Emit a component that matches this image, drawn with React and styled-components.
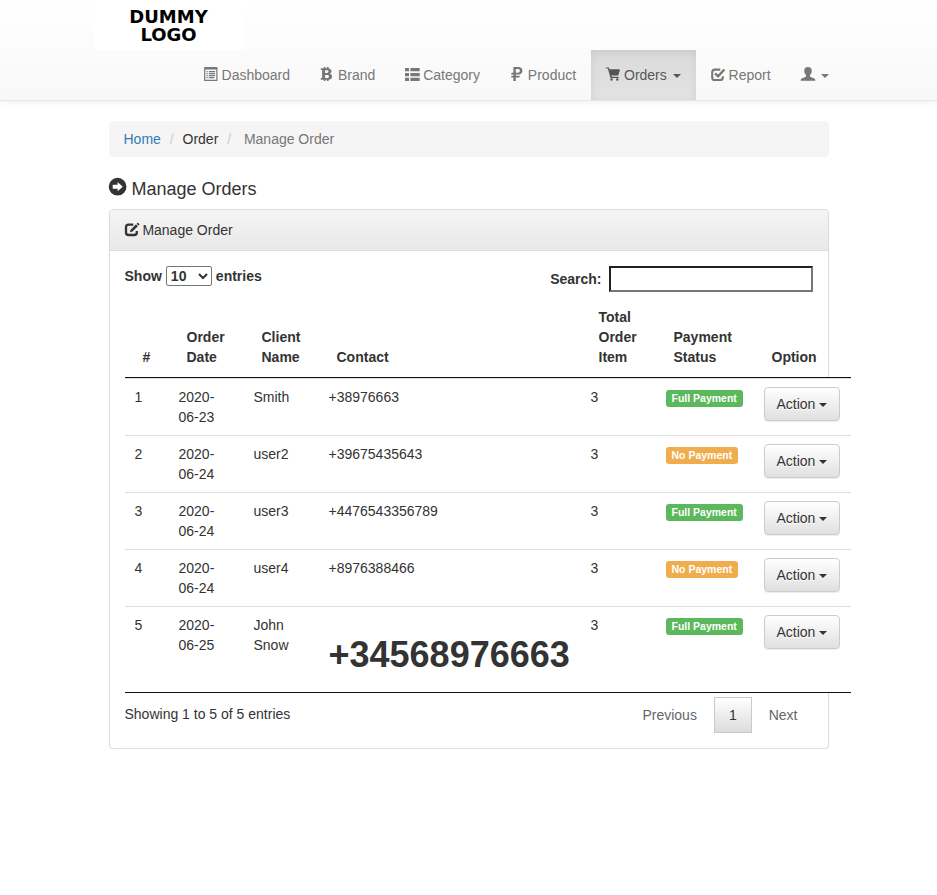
import React from 'react';
import styled, { createGlobalStyle } from 'styled-components';

const GlobalStyle = createGlobalStyle`
  *, *::before, *::after { box-sizing: border-box; }
  body {
    margin: 0;
    background: #fff;
    color: #333;
    font-family: "Liberation Sans", Arial, sans-serif;
    font-size: 14px;
    line-height: 20px;
  }
  button, input, select { font-family: inherit; font-size: inherit; color: inherit; }
`;

const Container = styled.div`
  max-width: 750px;
  margin: 0 auto;
  padding: 0 15px;
`;

const Navbar = styled.header`
  background: linear-gradient(to bottom, #fff 0%, #f8f8f8 100%);
  border-bottom: 1px solid #e7e7e7;
  box-shadow: inset 0 1px 0 rgba(255, 255, 255, 0.15), 0 1px 5px rgba(0, 0, 0, 0.075);
`;

const NavbarInner = styled.div`
  max-width: 750px;
  margin: 0 auto;
  display: flex;
  flex-direction: column;
  align-items: flex-start;
`;

const Brand = styled.a`
  display: flex;
  flex-direction: column;
  align-items: center;
  justify-content: center;
  width: 150px;
  height: 50px;
  padding-top: 2px;
  background: #fff;
  color: #000;
  font-family: "DejaVu Sans", sans-serif;
  font-size: 18px;
  font-weight: 700;
  line-height: 18px;
  text-decoration: none;
`;

const NavList = styled.ul`
  display: flex;
  align-self: flex-end;
  margin: 0;
  padding: 0;
  list-style: none;
`;

const NavLink = styled.a`
  display: block;
  padding: 15px;
  color: ${(p) => (p.$active ? '#555' : '#777')};
  background: ${(p) => (p.$active ? 'linear-gradient(to bottom, #dbdbdb 0%, #e2e2e2 100%)' : 'none')};
  box-shadow: ${(p) => (p.$active ? 'inset 0 3px 9px rgba(0, 0, 0, 0.075)' : 'none')};
  text-decoration: none;
  text-shadow: 0 1px 0 rgba(255, 255, 255, 0.25);
  white-space: nowrap;
`;

const IconBox = styled.span`
  display: inline-block;
  width: ${(p) => p.$size || 14}px;
  height: ${(p) => p.$size || 14}px;
  vertical-align: ${(p) => (p.$low ? -2 : -1)}px;
  svg { display: block; width: 100%; height: 100%; overflow: visible; }
`;

const Caret = styled.span`
  display: inline-block;
  margin-left: ${(p) => (p.$tight ? 0 : 2)}px;
  vertical-align: middle;
  border-top: 4px solid;
  border-right: 4px solid transparent;
  border-left: 4px solid transparent;
`;

const Breadcrumb = styled.ol`
  margin: 20px 0 21px;
  padding: 8px 15px;
  list-style: none;
  background: #f5f5f5;
  border-radius: 4px;
`;

const Crumb = styled.li`
  display: inline-block;
  color: ${(p) => (p.$active ? '#777' : '#333')};
  a { color: #337ab7; text-decoration: none; }
`;

const Slash = styled.span`
  padding: 0 5px;
  color: #ccc;
`;

const Title = styled.h4`
  margin: 0 0 10px;
  font-size: 18px;
  font-weight: 500;
  line-height: 20px;
`;

const Panel = styled.section`
  background: #fff;
  border: 1px solid #ddd;
  border-radius: 4px;
  box-shadow: 0 1px 2px rgba(0, 0, 0, 0.05);
`;

const PanelHeading = styled.div`
  padding: 10px 15px;
  border-bottom: 1px solid #ddd;
  border-radius: 3px 3px 0 0;
  background: linear-gradient(to bottom, #f5f5f5 0%, #e8e8e8 100%);
`;

const PanelBody = styled.div`
  padding: 15px;
`;

const Toolbar = styled.div`
  display: flex;
  justify-content: space-between;
  align-items: flex-start;
  margin-bottom: 5px;
`;

const FieldLabel = styled.label`
  display: flex;
  align-items: center;
  gap: ${(p) => p.$gap}px;
  font-weight: 700;
`;

const LengthSelect = styled.select`
  width: 46px;
  height: 20px;
  font-weight: 700;
  background: #fff;
  border: 1px solid #767676;
  border-radius: 2px;
`;

const SearchInput = styled.input`
  width: 204px;
  height: 26px;
  padding: 1px 2px;
  background: #fff;
  border: 2px inset #767676;
  font-weight: 400;
`;

const Table = styled.table`
  width: 100%;
  border-collapse: separate;
  border-spacing: 0;
  border-bottom: 1px solid #111;
`;

const HeadCell = styled.th`
  min-width: ${(p) => p.$min}px;
  padding: 10px 18px;
  border-bottom: 1px solid #111;
  text-align: left;
  vertical-align: bottom;
`;

const Cell = styled.td`
  padding: 8px 10px;
  background: #fff;
  border-top: 1px solid #ddd;
  vertical-align: top;
`;

const BigContact = styled.h1`
  margin: 20px 0 10px;
  font-size: 36px;
  font-weight: 700;
  line-height: 39px;
`;

const Status = styled.span`
  display: inline-block;
  padding: 2px 6px 3px;
  border-radius: 3px;
  background: ${(p) => (p.$paid ? '#5cb85c' : '#f0ad4e')};
  color: #fff;
  font-size: 75%;
  font-weight: 700;
  line-height: 12px;
  vertical-align: middle;
  white-space: nowrap;
`;

const ActionButton = styled.button`
  display: block;
  padding: 6px 12px;
  border: 1px solid #ccc;
  border-radius: 4px;
  background: linear-gradient(to bottom, #fff 0%, #e0e0e0 100%);
  box-shadow: inset 0 1px 0 rgba(255, 255, 255, 0.15), 0 1px 1px rgba(0, 0, 0, 0.075);
  line-height: 20px;
  text-shadow: 0 1px 0 #fff;
  white-space: nowrap;
  cursor: pointer;
`;

const TableFooter = styled.div`
  display: flex;
  justify-content: space-between;
  align-items: flex-start;
  padding-top: 4px;
`;

const Info = styled.div`
  padding-top: 7px;
`;

const Pager = styled.nav`
  display: flex;
  gap: 2px;
`;

const PageButton = styled.button`
  padding: 7px 14px;
  border: 1px solid ${(p) => (p.$current ? '#cacaca' : 'transparent')};
  background: ${(p) => (p.$current ? 'linear-gradient(to bottom, #fff 0%, #dcdcdc 100%)' : 'transparent')};
  color: ${(p) => (p.$current ? '#333' : '#666')};
  line-height: 20px;
`;

const Icon = ({ size, low, children }) => (
  <IconBox $size={size} $low={low} aria-hidden="true">
    <svg viewBox="0 0 14 14" fill="currentColor">{children}</svg>
  </IconBox>
);

const ListAltIcon = () => (
  <Icon>
    <path fillRule="evenodd" d="M.5 0h12.600q.4 0 .4.4v13.200q0 .4-.4.4H.5q-.4 0-.4-.4V.4Q.1 0 .5 0zM1.300 2.600v10.200h11V2.600z" />
    <path d="M2.500 4h1.200v1.200H2.500zM2.500 6h1.200v1.200H2.500zM2.500 8h1.200v1.200H2.500zM2.500 10h1.200v1.200H2.500zM4.800 4h6.300v1.200H4.800zM4.800 6h6.300v1.200H4.800zM4.800 8h6.300v1.200H4.800zM4.800 10h5.500v1.200H4.800z" />
  </Icon>
);

const BitcoinIcon = () => (
  <Icon>
    <path fillRule="evenodd" d="M.8 1.200h3V0h1.700v1.200h1.400V0h1.700v1.400c1.900.3 2.900 1.300 2.900 2.800 0 1.200-.6 2-1.600 2.500 1.400.5 2.200 1.500 2.200 2.900 0 1.900-1.300 3-3.500 3.200V14H6.900v-1.200H5.500V14H3.800v-1.200h-3v-1.700l1.300-.2V3.100L.8 2.900zM5.100 3.200v2.700h1.900c1 0 1.500-.5 1.500-1.400S8 3.200 7 3.200zM5.100 7.900v3h2.200c1.100 0 1.700-.6 1.700-1.500s-.6-1.500-1.700-1.500z" />
  </Icon>
);

const ThListIcon = () => (
  <Icon low>
    <path d="M.5 0h3q.5 0 .5.5v2.700H0V.5Q0 0 .5 0zM5.400 0h8.800q.5 0 .5.5v2.700H5.400zM0 5h4v3.300H0zM5.400 5h9.300v3.300H5.400zM0 9.800h4V13H.5q-.5 0-.5-.5zM5.400 9.800h9.300v2.700q0 .5-.5.5H5.400z" />
  </Icon>
);

const RubleIcon = () => (
  <Icon>
    <path fillRule="evenodd" d="M3.400 0h5c2.500 0 4 1.300 4 3.700s-1.500 3.800-4 3.800H5.800v1.300h4.100L9.300 10.400H5.800V14H3.400v-3.600H1l.7-1.600h1.700V7.500H1l.7-1.700h1.700zM5.800 2v3.700h2.100c1.300 0 2-.6 2-1.900S9.200 2 7.900 2z" />
  </Icon>
);

const CartIcon = () => (
  <Icon>
    <path d="M.3.4h2.200q.4 0 .5.4l.5 1.400h9.900q.7 0 .5.7l-1.500 5q-.2.6-.8.6H5.400l.4 1.300h6.400q.6 0 .6.600t-.6.600H5q-.5 0-.7-.5L1.900 1.600H.3Q-.2 1.600-.2 1T.3.400z" />
    <circle cx="5.500" cy="12.500" r="1.200" />
    <circle cx="11.300" cy="12.500" r="1.200" />
  </Icon>
);

const CheckIcon = () => (
  <Icon low>
    <path fill="none" stroke="currentColor" strokeWidth="2.1" d="M9.300 1.600H3.800Q1.200 1.600 1.200 4.200v5.200q0 2.600 2.600 2.600h5.400q2.600 0 2.600-2.600V8.200" />
    <path fill="none" stroke="currentColor" strokeWidth="2.400" d="M4.100 5.400l3 2.900 6.300-6.800" />
  </Icon>
);

const EditIcon = () => (
  <Icon low>
    <path fill="none" stroke="currentColor" strokeWidth="2.300" d="M8.300 1.600H3.600Q1 1.600 1 4.200v5.200q0 2.600 2.600 2.600h5.600q2.600 0 2.600-2.600V8" />
    <path d="M4.900 9.300l.7-2.600L11 1.300l1.900 1.900-5.400 5.400zM11.600.7l.8-.8q.4-.4.8 0L14.300 1q.4.400 0 .8l-.8.8z" />
  </Icon>
);

const UserIcon = () => (
  <Icon>
    <path d="M7 0c2.400 0 3.800 1.500 3.800 3.700 0 1.700-.8 3.300-1.800 4.200v1.300c0 .4.3.7.7.9l3.500 1.400c.8.300 1.100.9 1.100 1.700v.6H-.3v-.6c0-.8.3-1.400 1.100-1.700l3.500-1.400c.4-.2.7-.5.7-.9V7.900C4 7 3.200 5.400 3.200 3.700 3.200 1.500 4.600 0 7 0z" />
  </Icon>
);

const CircleArrowIcon = () => (
  <Icon size={18}>
    <path fillRule="evenodd" d="M6.700-.1a6.900 6.900 0 1 0 0 13.800A6.900 6.900 0 0 0 6.700-.1zM6.700 3.200l4 3.600-4 3.600V8.400H2.900V5.200h3.800z" />
  </Icon>
);

const navItems = [
  { label: 'Dashboard', icon: <ListAltIcon /> },
  { label: 'Brand', icon: <BitcoinIcon /> },
  { label: 'Category', icon: <ThListIcon /> },
  { label: 'Product', icon: <RubleIcon /> },
  { label: 'Orders', icon: <CartIcon />, active: true, menu: true },
  { label: 'Report', icon: <CheckIcon /> },
  { icon: <UserIcon />, menu: true, name: 'Account' },
];

const columns = [
  { name: '#', min: 44 },
  { name: 'Order Date', min: 75 },
  { name: 'Client Name', min: 75 },
  { name: 'Contact', min: 262 },
  { name: 'Total Order Item', min: 75 },
  { name: 'Payment Status', min: 98 },
  { name: 'Option', min: 97 },
];

const orders = [
  { date: '2020-06-23', client: 'Smith', contact: '+38976663', items: 3, paid: true },
  { date: '2020-06-24', client: 'user2', contact: '+39675435643', items: 3, paid: false },
  { date: '2020-06-24', client: 'user3', contact: '+4476543356789', items: 3, paid: true },
  { date: '2020-06-24', client: 'user4', contact: '+8976388466', items: 3, paid: false },
  { date: '2020-06-25', client: 'John Snow', contact: '+34568976663', items: 3, paid: true, big: true },
];

export default function App() {
  return (
    <>
      <GlobalStyle />
      <Navbar>
        <NavbarInner>
          <Brand href="#">
            <span>DUMMY</span>
            <span>LOGO</span>
          </Brand>
          <NavList>
            {navItems.map((item) => (
              <li key={item.label || item.name}>
                <NavLink href="#" $active={item.active} aria-label={item.name}>
                  {item.icon} {item.label}
                  {item.menu && item.label && ' '}
                  {item.menu && <Caret />}
                </NavLink>
              </li>
            ))}
          </NavList>
        </NavbarInner>
      </Navbar>

      <Container as="main">
        <Breadcrumb>
          <Crumb><a href="#">Home</a></Crumb>{' '}
          <Crumb><Slash>/&nbsp;</Slash>Order</Crumb>{' '}
          <Crumb><Slash>/&nbsp;</Slash></Crumb>{' '}
          <Crumb $active>Manage Order</Crumb>
        </Breadcrumb>

        <Title><CircleArrowIcon /> Manage Orders</Title>

        <Panel>
          <PanelHeading><EditIcon /> Manage Order</PanelHeading>
          <PanelBody>
            <Toolbar>
              <FieldLabel $gap={4}>
                Show
                <LengthSelect defaultValue="10">
                  <option>10</option>
                  <option>25</option>
                  <option>50</option>
                  <option>100</option>
                </LengthSelect>
                entries
              </FieldLabel>
              <FieldLabel $gap={7}>
                Search:
                <SearchInput type="search" />
              </FieldLabel>
            </Toolbar>

            <Table>
              <thead>
                <tr>
                  {columns.map((col) => <HeadCell key={col.name} $min={col.min}>{col.name}</HeadCell>)}
                </tr>
              </thead>
              <tbody>
                {orders.map((order, i) => (
                  <tr key={order.contact}>
                    <Cell>{i + 1}</Cell>
                    <Cell>{order.date}</Cell>
                    <Cell>{order.client}</Cell>
                    <Cell>{order.big ? <BigContact>{order.contact}</BigContact> : order.contact}</Cell>
                    <Cell>{order.items}</Cell>
                    <Cell><Status $paid={order.paid}>{order.paid ? 'Full Payment' : 'No Payment'}</Status></Cell>
                    <Cell><ActionButton type="button">Action <Caret $tight /></ActionButton></Cell>
                  </tr>
                ))}
              </tbody>
            </Table>

            <TableFooter>
              <Info>Showing 1 to 5 of 5 entries</Info>
              <Pager aria-label="Pages">
                <PageButton type="button">Previous</PageButton>
                <PageButton type="button" $current>1</PageButton>
                <PageButton type="button">Next</PageButton>
              </Pager>
            </TableFooter>
          </PanelBody>
        </Panel>
      </Container>
    </>
  );
}
